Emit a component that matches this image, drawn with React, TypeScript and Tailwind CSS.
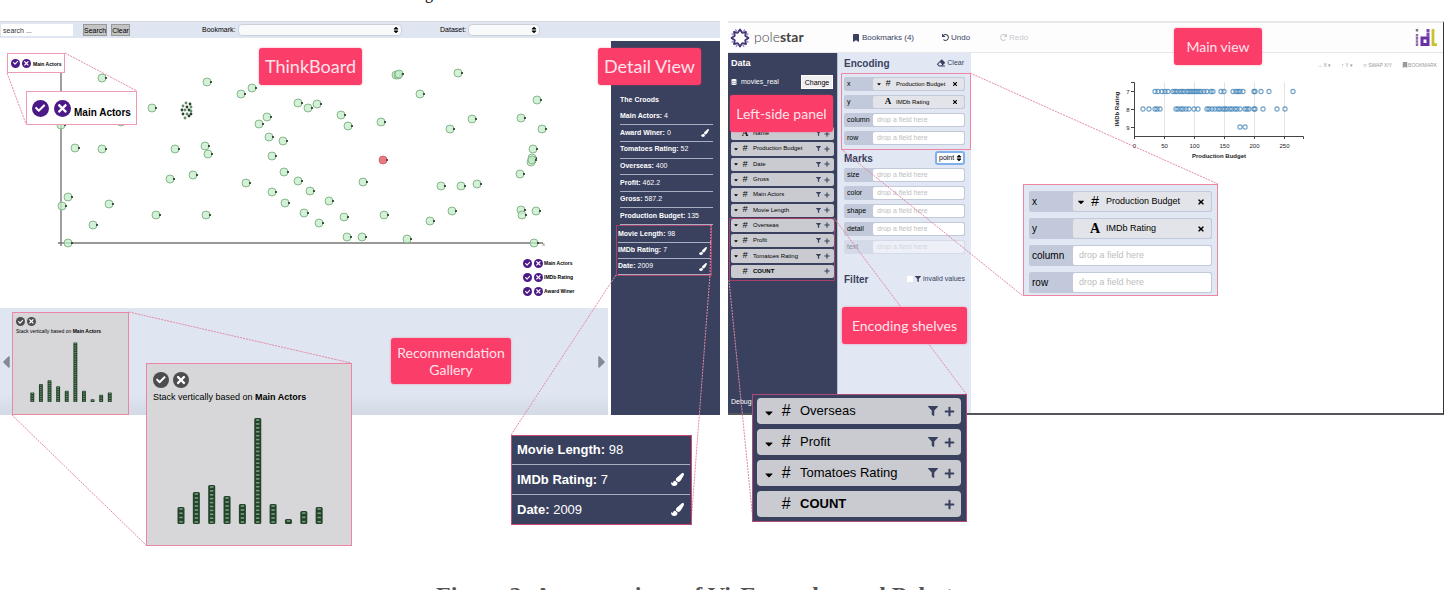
import React from "react";
import { FaPaintBrush, FaFilter, FaPlus, FaTimes, FaBookmark, FaUndo, FaRedo, FaEraser, FaDatabase, FaCaretDown, FaSort, FaCheck, FaCaretLeft, FaCaretRight } from "react-icons/fa";

const POINTS: [number, number][] = [
  [102, 78], [207, 82], [241, 94], [252, 88], [298, 103], [152, 108], [61, 125], [121, 122], [75, 148], [102, 149],
  [175, 149], [205, 146], [208, 154], [259, 124], [267, 117], [269, 137], [283, 141], [272, 156], [284, 172], [298, 181],
  [170, 179], [193, 175], [246, 183], [272, 192], [285, 203], [68, 197], [62, 206], [109, 204], [93, 225], [156, 215],
  [206, 215], [304, 213], [68, 243], [308, 108], [317, 104], [341, 115], [348, 126], [381, 122], [396, 75], [398, 75],
  [399, 74], [420, 94], [458, 73], [450, 129], [472, 119], [521, 118], [537, 100], [542, 129], [533, 149], [532, 158],
  [531, 162], [532, 160], [520, 174], [363, 182], [310, 191], [329, 201], [319, 223], [344, 217], [384, 215], [347, 237],
  [362, 237], [407, 239], [430, 221], [452, 211], [441, 186], [461, 186], [477, 184], [521, 210], [522, 215], [536, 211],
  [534, 243],
];

const CLUSTER: [number, number][] = [
  [186, 103], [190, 104], [183, 106], [187, 107], [191, 107], [182, 110], [185, 110], [189, 110], [191, 111],
  [183, 114], [187, 114], [191, 114], [185, 118], [189, 116],
];

const BARS = [17, 32, 39, 28, 20, 106, 20, 5, 13, 17];

const ROW7 = [1155, 1158, 1162, 1165, 1168, 1173, 1175, 1177, 1180, 1182, 1184, 1187, 1189, 1191, 1193, 1195, 1197, 1199, 1201, 1204, 1207, 1211, 1213, 1221, 1224, 1233, 1236, 1238, 1240, 1243, 1254, 1255, 1261, 1269, 1293];
const ROW8 = [1143, 1149, 1155, 1157, 1160, 1176, 1178, 1181, 1183, 1186, 1189, 1194, 1198, 1207, 1209, 1212, 1215, 1218, 1220, 1223, 1225, 1227, 1230, 1232, 1235, 1237, 1240, 1245, 1247, 1249, 1254, 1255, 1263, 1277, 1285];

const DETAILS: { label: string; value: string; brush?: boolean }[] = [
  { label: "Main Actors", value: "4" },
  { label: "Award Winer", value: "0", brush: true },
  { label: "Tomatoes Rating", value: "52" },
  { label: "Overseas", value: "400" },
  { label: "Profit", value: "462.2" },
  { label: "Gross", value: "587.2" },
  { label: "Production Budget", value: "135" },
];

const DETAILS_MARKED: { label: string; value: string; brush?: boolean }[] = [
  { label: "Movie Length", value: "98" },
  { label: "IMDb Rating", value: "7", brush: true },
  { label: "Date", value: "2009", brush: true },
];

const FIELDS = ["Name", "Production Budget", "Date", "Gross", "Main Actors", "Movie Length", "Overseas", "Profit", "Tomatoes Rating", "COUNT"];

function Label({ className, children }: { className: string; children: React.ReactNode }) {
  return (
    <div className={`absolute flex items-center justify-center rounded-[3px] bg-[#fb3d69] text-center font-[Lato,sans-serif] text-[#ffe3ea] shadow-[0_0_2px_rgba(251,61,105,0.6)] ${className}`}>
      {children}
    </div>
  );
}

function Votes({ size, color, gap }: { size: string; color: string; gap: string }) {
  return (
    <span className={`flex shrink-0 ${gap}`}>
      <button type="button" aria-label="Accept" className={`flex items-center justify-center rounded-full text-white ${size} ${color}`}>
        <FaCheck className="size-3/5" />
      </button>
      <button type="button" aria-label="Reject" className={`flex items-center justify-center rounded-full text-white ${size} ${color}`}>
        <FaTimes className="size-3/4" />
      </button>
    </span>
  );
}

function StackChart({ className }: { className: string }) {
  return (
    <svg viewBox="0 0 146 107" className={className} role="img" aria-label="Movies stacked by main actors">
      {BARS.map((h, i) => {
        const x = i * 15.35 + 0.5;
        const n = Math.max(1, Math.round(h / 4));
        return (
          <g key={i}>
            <rect x={x} y={107 - h} width="7" height={h} rx="1.5" fill="#26422c" />
            {Array.from({ length: n }, (_, k) => (
              <rect key={k} x={x + 1.8} y={107 - (k + 1) * (h / n) + 1.2} width="3.4" height="1.6" fill="#6fa377" />
            ))}
          </g>
        );
      })}
    </svg>
  );
}

function DetailRow({ label, value, brush }: { label: string; value: string; brush?: boolean }) {
  return (
    <li className="flex items-center justify-between border-b border-[#a9afc2] pr-1">
      <span><b>{label}:</b> {value}</span>
      {brush && <FaPaintBrush className="size-2" />}
    </li>
  );
}

function FieldRow({ name, big }: { name: string; big?: boolean }) {
  const count = name === "COUNT";
  return (
    <li className={big ? "flex h-[26px] items-center rounded-sm bg-[#c9cbd1] pr-1.5 pl-1.5 text-[13px]" : "flex items-center rounded-[2px] bg-[#c9cbd1] pr-1 pl-0.5 text-[6px]"}>
      <FaCaretDown className={`${big ? "mt-1 size-3" : "size-1.5"} ${count || name === "Name" ? "invisible" : ""}`} />
      <span className={`text-center ${big ? "w-[22px] text-[16px]" : "w-3 text-[9px]"} ${name === "Name" ? "font-['Liberation_Serif',serif] font-bold" : "italic"}`}>
        {name === "Name" ? "A" : "#"}
      </span>
      <span className={`flex-1 whitespace-nowrap ${big ? "pl-[3px]" : "pl-0.5"} ${count ? "font-bold" : ""}`}>{name}</span>
      <span className={`flex items-center text-[#39415e] ${big ? "gap-1.5" : "gap-[3px]"}`}>
        {!count && <button type="button" aria-label={`Filter ${name}`}><FaFilter className={big ? "size-2.5" : "size-[5px]"} /></button>}
        <button type="button" aria-label={`Add ${name}`}><FaPlus className={big ? "size-[11px]" : "size-1.5"} /></button>
      </span>
    </li>
  );
}

function Shelf({ name, field, kind, big, faded }: { name: string; field?: string; kind?: string; big?: boolean; faded?: boolean }) {
  return (
    <div className={`flex items-stretch rounded-[2px] bg-[#c2c9da] ${big ? "h-[21px] p-px text-[10px]" : "h-3.5 p-px text-[7px]"} ${faded ? "opacity-40" : ""}`}>
      <span className={`flex items-center ${big ? "w-[43px] pl-0.5" : "w-7 pl-0.5"}`}>{name}</span>
      {field ? (
        <span className={`flex flex-1 items-center rounded-[2px] bg-[#e3e4e9] pr-1.5 ${big ? "pl-[3px] text-[9px]" : "pl-[3px] text-[6px]"}`}>
          <FaCaretDown className={`${big ? "size-2.5" : "size-1.5"} ${kind === "A" ? "invisible" : ""}`} />
          <b className={`text-center ${big ? "w-[18px] text-[14px]" : "w-3 text-[9px]"} ${kind === "A" ? "font-['Liberation_Serif',serif]" : "font-normal italic"}`}>{kind}</b>
          <span className="flex-1 pl-0.5 whitespace-nowrap">{field}</span>
          <button type="button" aria-label={`Remove ${field}`}><FaTimes className={big ? "size-2" : "size-1.5"} /></button>
        </span>
      ) : (
        <input aria-label={name} placeholder="drop a field here" className={`w-0 min-w-0 flex-1 rounded-[2px] bg-white placeholder:text-[#bdbdc0] ${big ? "px-1.5 text-[9px]" : "px-1"}`} />
      )}
    </div>
  );
}

function LeftApp() {
  return (
    <section className="flex flex-col text-[7px]">
      <header className="flex h-[17px] items-center border-t border-[#d3d7de] bg-[#dfe5f1] pl-px">
        <input aria-label="Search" placeholder="search ..." className="h-3 w-[72px] bg-white px-0.5 placeholder:text-[#333]" />
        <button type="button" className="ml-2.5 h-3 w-6 border border-[#999] bg-[#c4c4c4] leading-none">Search</button>
        <button type="button" className="ml-1 h-3 w-[19px] border border-[#999] bg-[#c4c4c4] leading-none">Clear</button>
        <label htmlFor="bookmark" className="ml-[72px] w-9">Bookmark:</label>
        <span className="relative flex items-center">
          <select id="bookmark" className="h-3 w-[164px] appearance-none rounded-sm border border-[#ccd0d8] bg-[#f8f9fb]"></select>
          <FaSort className="pointer-events-none absolute right-0.5 size-2" />
        </span>
        <label htmlFor="dataset" className="ml-[38px] w-7">Dataset:</label>
        <span className="relative flex items-center">
          <select id="dataset" className="h-3 w-[72px] appearance-none rounded-sm border border-[#ccd0d8] bg-[#f8f9fb]"></select>
          <FaSort className="pointer-events-none absolute right-0.5 size-2" />
        </span>
      </header>
      <div className="flex flex-1 gap-[3px]">
        <div className="flex flex-1 flex-col">
          <div className="relative h-[270px]">
            <svg viewBox="0 38 608 270" className="size-full" role="img" aria-label="Scatter plot of movies">
              <path d="M61 62V246M58 243H543" stroke="#777" strokeWidth="1.4" fill="none" />
              <text x="542" y="246" fontSize="6" fill="#888">s</text>
              {POINTS.map(([x, y], i) => (
                <g key={i}>
                  <circle cx={x} cy={y} r="4" fill="#c4ecc8" fillOpacity="0.75" stroke="#87b78c" strokeWidth="1" />
                  <circle cx={x + 4} cy={y} r="1.1" fill="#1e3323" />
                </g>
              ))}
              {CLUSTER.map(([x, y], i) => (
                <circle key={i} cx={x} cy={y} r="1.4" fill={i % 2 ? "#2c4030" : "#5e8f68"} />
              ))}
              <circle cx="383" cy="160" r="4" fill="#e77982" stroke="#d16a72" />
              <circle cx="387" cy="160" r="1" fill="#5a1d22" />
            </svg>
            <ul className="absolute top-[221px] left-[523px] flex flex-col gap-[5px] text-[5px] font-bold leading-[9px]">
              {["Main Actors", "IMDb Rating", "Award Winer"].map((t) => (
                <li key={t} className="flex items-center gap-px whitespace-nowrap">
                  <Votes size="size-[9px]" color="bg-[#4b1a86]" gap="gap-0.5" />
                  {t}
                </li>
              ))}
            </ul>
          </div>
          <div className="flex flex-1 items-center bg-linear-to-b from-[#dfe5f1] from-80% to-[#d3d9e5]">
            <button type="button" aria-label="Previous" className="w-3 text-[#838995]"><FaCaretLeft className="h-5 w-3" /></button>
            <article className="mt-1 flex h-[103px] w-[117px] flex-col border border-[#ec86a4] bg-[#d7d7d9] px-[3px] pt-1">
              <Votes size="size-[9px]" color="bg-[#4d4d4f]" gap="gap-0.5" />
              <p className="mt-px text-[5px] leading-2 whitespace-nowrap">Stack vertically based on <b>Main Actors</b></p>
              <StackChart className="mt-[7px] ml-3.5 h-[60px] w-[82px]" />
            </article>
            <button type="button" aria-label="Next" className="ml-auto flex w-3 justify-center text-[#838995]"><FaCaretRight className="h-5 w-3" /></button>
          </div>
        </div>
        <aside className="mt-[3px] w-[109px] bg-[#39415e] pt-[51px] text-white">
          <ul className="grid h-[133px] auto-rows-fr pr-[7px] pl-[9px]">
            <li className="flex items-center font-bold">The Croods</li>
            {DETAILS.map((d) => <DetailRow key={d.label} {...d} />)}
          </ul>
          <ul className="mr-[8px] ml-[5px] grid h-[51px] auto-rows-fr border border-[#a64069] pt-px pl-px">
            {DETAILS_MARKED.map((d) => <DetailRow key={d.label} {...d} />)}
          </ul>
        </aside>
      </div>
    </section>
  );
}

function Polestar() {
  return (
    <svg viewBox="-10 -10 20 20" className="size-5" fill="none" strokeLinejoin="round" aria-hidden="true">
      <polygon points="0,-8.5 2.2,-5.2 6,-6 5.2,-2.2 8.5,0 5.2,2.2 6,6 2.2,5.2 0,8.5 -2.2,5.2 -6,6 -5.2,2.2 -8.5,0 -5.2,-2.2 -6,-6 -2.2,-5.2" stroke="#43356f" strokeWidth="1.8" />
      <path d="M-5 -8.500L-2 -6M5 -8.500L3 -6M8.500 -4.500L6 -2.500M8.500 4.500L6 2.500M4 8.800L2.500 6M-4 8.800L-2.500 6M-8.500 4.500L-6 2.500M-8.500 -4.500L-6 -2.500" stroke="#a48fce" strokeWidth="1.5" />
    </svg>
  );
}

function Idl() {
  return (
    <svg viewBox="0 0 22 19" className="h-[19px] w-[22px]" fill="none" role="img" aria-label="idl">
      <path d="M2 1V3.500" stroke="#777" strokeWidth="2.4" />
      <path d="M2 6V18" stroke="#8c6ba8" strokeWidth="2.4" strokeDasharray="2.600 .5" />
      <path d="M7 10H13V16.500H7Z" stroke="#6b2fa5" strokeWidth="3" />
      <path d="M13 1V9" stroke="#7b45b0" strokeWidth="3" strokeDasharray="3.500 .4" />
      <path d="M18 1V16.600H22" stroke="#c9c22f" strokeWidth="2.8" />
    </svg>
  );
}

function Dots({ xs, y }: { xs: number[]; y: number }) {
  return <>{xs.map((x, i) => <circle key={i} cx={x} cy={y} r="2.1" fill="none" stroke="#3d80b5" strokeOpacity="0.75" strokeWidth="1.1" />)}</>;
}

function RightApp() {
  return (
    <section className="mr-px flex min-w-0 flex-col border-t-2 border-r border-b-2 border-t-[#e6e7ea] border-r-[#333] border-b-[#55565c] text-[7px]">
      <header className="flex h-[30px] items-center border-b border-[#e8e8ec] bg-[#fdfdfe] pr-1.5 pl-0.5 text-[#39415e]">
        <span className="flex w-[122px] items-center gap-1">
          <Polestar />
          <span className="pb-0.5 font-[Lato,sans-serif] text-[14px] font-light text-[#444]">pole<b className="font-bold">star</b></span>
        </span>
        <button type="button" className="flex w-[90px] items-center gap-0.5 text-[8px]"><FaBookmark className="size-2" />Bookmarks (4)</button>
        <button type="button" className="flex w-[58px] items-center gap-0.5 text-[8px]"><FaUndo className="size-[7px]" />Undo</button>
        <button type="button" disabled className="flex items-center gap-0.5 text-[8px] text-[#c9c9cf]"><FaRedo className="size-[7px]" />Redo</button>
        <span className="ml-auto"><Idl /></span>
      </header>
      <div className="flex flex-1">
        <aside className="flex w-[109px] flex-col bg-[#39415e] px-[3px] pt-1">
          <h2 className="text-[9px] leading-3 font-bold text-white">Data</h2>
          <div className="mt-1.5 flex h-3.5 items-center gap-1 text-white">
            <FaDatabase className="size-1.5" />
            <span>movies_real</span>
            <button type="button" className="mr-px ml-auto h-3.5 w-8 border border-white bg-[#efeff1] leading-none text-black">Change</button>
          </div>
          <ul className="mt-[38px] grid h-[151px] auto-rows-fr gap-0.5">
            {FIELDS.map((f) => <FieldRow key={f} name={f} />)}
          </ul>
          <a href="#debug" className="mt-auto mb-1.5 text-white">Debug</a>
        </aside>
        <div className="w-[134px] border-l border-[#b9bfce] bg-[#e1e7f3] px-1.5 pt-[3px]">
          <div className="flex h-3.5 items-center justify-between pr-px text-[#39415e]">
            <h2 className="text-[10px] font-bold">Encoding</h2>
            <button type="button" className="flex items-center gap-0.5"><FaEraser className="size-2" />Clear</button>
          </div>
          <div className="mt-[7px] flex flex-col gap-1">
            <Shelf name="x" field="Production Budget" kind="#" />
            <Shelf name="y" field="IMDb Rating" kind="A" />
            <Shelf name="column" />
            <Shelf name="row" />
          </div>
          <div className="mt-1.5 mb-[3px] flex h-3.5 items-center justify-between text-[#39415e]">
            <label htmlFor="marks" className="text-[10px] font-bold">Marks</label>
            <span className="relative flex items-center">
              <select id="marks" className="h-3.5 w-[30px] appearance-none rounded-[3px] border-2 border-[#7fb0ea] bg-white pl-0.5 text-[7px] text-black">
                <option>point</option>
              </select>
              <FaSort className="pointer-events-none absolute right-0.5 size-2 text-black" />
            </span>
          </div>
          <div className="flex flex-col gap-1">
            <Shelf name="size" />
            <Shelf name="color" />
            <Shelf name="shape" />
            <Shelf name="detail" />
            <Shelf name="text" faded />
          </div>
          <div className="mt-[18px] flex h-3.5 items-center justify-between text-[#39415e]">
            <h2 className="text-[10px] font-bold">Filter</h2>
            <label className="flex items-center gap-0.5">
              <input type="checkbox" className="size-1.5 appearance-none bg-white" />
              <FaFilter className="size-1.5" />
              invalid values
            </label>
          </div>
        </div>
        <div className="min-w-0 flex-1">
          <div className="flex justify-end gap-2.5 pt-2 pr-1.5 text-[5px] leading-2 text-[#999]">
            <button type="button">→ X ▾</button>
            <button type="button">↑ Y ▾</button>
            <button type="button">◇ SWAP X/Y</button>
            <button type="button" className="flex items-center"><FaBookmark className="size-1.5" />BOOKMARK</button>
          </div>
          <svg viewBox="1110 78 196 86" className="mt-[9px] ml-[139px] h-[86px] w-[196px]" role="img" aria-label="IMDb Rating by Production Budget">
            <path d="M1164.5 82V136M1194.5 82V136M1224.5 82V136M1254.5 82V136M1284.5 82V136" stroke="#e3e3e3" />
            <path d="M1131 82.500H1134.500V136.500H1303.500V139M1131 91.500H1134M1131 109.500H1134M1131 127.500H1134M1134.500 136V139M1164.500 136V139M1194.500 136V139M1224.500 136V139M1254.500 136V139M1284.500 136V139" stroke="#444" fill="none" />
            <Dots xs={ROW7} y={91.5} />
            <Dots xs={ROW8} y={109} />
            <Dots xs={[1240, 1245]} y={127} />
            <g fontSize="6" fill="#222" textAnchor="middle">
              {["7", "8", "9"].map((t, i) => <text key={t} x="1128" y={94 + i * 18}>{t}</text>)}
              {["0", "50", "100", "150", "200", "250"].map((t, i) => <text key={t} x={1134.5 + i * 30} y="148">{t}</text>)}
              <text x="1219" y="158" fontWeight="bold">Production Budget</text>
              <text transform="translate(1119 109) rotate(-90)" fontWeight="bold">IMDb Rating</text>
            </g>
          </svg>
        </div>
      </div>
    </section>
  );
}

function Annotations() {
  return (
    <>
      <svg className="pointer-events-none absolute inset-0 size-full" fill="none" aria-hidden="true">
        <path
          d="M65 53L137 91M7 73L26 124M129 312L351 363M12 415L146 545M616 275L511 435M711 225L710 275L691 524M834 218L967 395M729 280L753 521M970 73L1218 184M841 149L1023 296"
          stroke="#e58aa5" strokeDasharray="2 1"
        />
        <path d="M729.500 218.500H834.500V280.500H729.500Z" stroke="#a64069" />
        <path d="M841.500 73.500H970.500V149.500H841.500Z" stroke="#ec86a4" />
      </svg>

      <div className="absolute top-[53px] left-[7px] flex h-5 w-[58px] items-center gap-0.5 border border-[#f19bb3] bg-white pl-[3px] text-[5px] font-bold whitespace-nowrap">
        <Votes size="size-[9px]" color="bg-[#4b1a86]" gap="gap-0.5" />
        <span className="pt-1">Main Actors</span>
      </div>
      <div className="absolute top-[91px] left-[26px] flex h-[34px] w-[111px] items-center gap-[3px] border border-[#f19bb3] bg-white pl-[5px] text-[10px] font-bold whitespace-nowrap">
        <Votes size="size-[17px]" color="bg-[#4b1a86]" gap="gap-[5px]" />
        <span className="pt-2">Main Actors</span>
      </div>

      <article className="absolute top-[363px] left-[146px] flex h-[183px] w-[206px] flex-col border border-[#ec86a4] bg-[#d7d7d9] pt-2 pl-1.5 text-[9px]">
        <Votes size="size-4" color="bg-[#4d4d4f]" gap="gap-1" />
        <p className="mt-[3px] leading-3 whitespace-nowrap">Stack vertically based on <b>Main Actors</b></p>
        <StackChart className="mt-3.5 ml-6 h-[107px] w-[146px]" />
      </article>

      <ul className="absolute top-[435px] left-[511px] grid h-[90px] w-[181px] auto-rows-fr border border-[#c94a76] bg-[#39415e] text-[13px] text-white">
        {DETAILS_MARKED.map((d, i) => (
          <li key={d.label} className={`mr-px flex items-center justify-between pr-1.5 pl-[5px] ${i < 2 ? "border-b border-[#a9afc2]" : ""}`}>
            <span><b>{d.label}:</b> {d.value}</span>
            {d.brush && <FaPaintBrush className="size-[13px]" />}
          </li>
        ))}
      </ul>

      <ul className="absolute top-[394px] left-[752px] flex h-[128px] w-[215px] flex-col gap-[5px] border border-[#b04a78] bg-[#39415e] pt-[3px] pr-[5px] pl-1">
        {["Overseas", "Profit", "Tomatoes Rating", "COUNT"].map((f) => <FieldRow key={f} name={f} big />)}
      </ul>

      <div className="absolute top-[184px] left-[1023px] flex h-[112px] w-[195px] flex-col gap-[6px] border border-[#ec86a4] bg-[#e1e7f3] px-[5px] pt-1.5">
        <Shelf big name="x" field="Production Budget" kind="#" />
        <Shelf big name="y" field="IMDb Rating" kind="A" />
        <Shelf big name="column" />
        <Shelf big name="row" />
      </div>

      <Label className="top-[48px] left-[259px] h-[37px] w-[103px] text-[18px]">ThinkBoard</Label>
      <Label className="top-[48px] left-[598px] h-[37px] w-[103px] text-[18px]">Detail View</Label>
      <Label className="top-[338px] left-[391px] h-[46px] w-[120px] text-[14px] leading-[17px]">Recommendation<br />Gallery</Label>
      <Label className="top-[95px] left-[730px] h-[37px] w-[103px] text-[14px]">Left-side panel</Label>
      <Label className="top-[28px] left-[1174px] h-[37px] w-[88px] text-[14px]">Main view</Label>
      <Label className="top-[307px] left-[842px] h-[37px] w-[125px] text-[14px]">Encoding shelves</Label>
    </>
  );
}

export default function App() {
  return (
    <main className="relative h-screen overflow-hidden bg-white font-['Liberation_Sans',Arial,sans-serif] text-black">
      <p className="-mt-4 h-[37px] pl-[425px] font-['Liberation_Serif',serif] text-[16px] leading-5">g</p>
      <figure>
        <div className="grid h-[393px] grid-cols-[720px_minmax(0,1fr)] gap-2">
          <LeftApp />
          <RightApp />
        </div>
        <Annotations />
        <figcaption className="mt-[165px] pl-[436px] font-['Liberation_Serif',serif] text-[24px] leading-8 font-bold whitespace-nowrap text-[#555]">
          Figure 2: A comparison of VisExemplar and Polestar.
        </figcaption>
      </figure>
    </main>
  );
}
